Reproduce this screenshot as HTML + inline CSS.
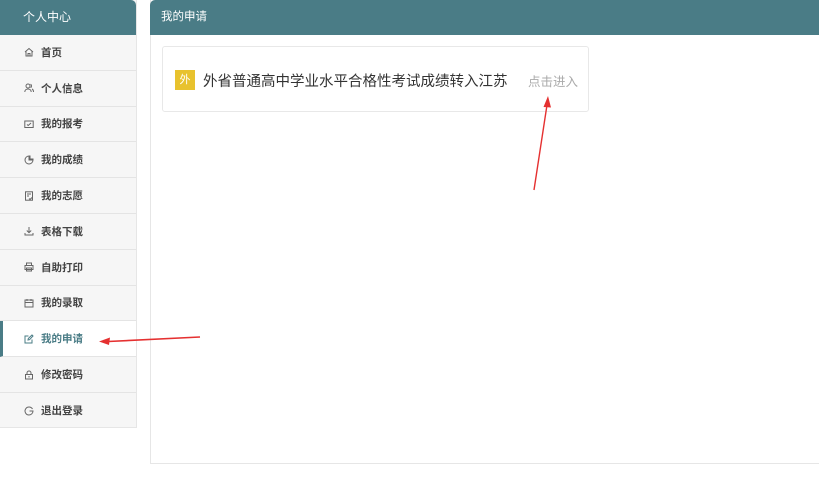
<!DOCTYPE html>
<html><head><meta charset="utf-8"><style>
*{margin:0;padding:0;box-sizing:border-box}
body{width:819px;height:481px;background:#fff;font-family:"Liberation Sans","Noto Sans CJK SC",sans-serif;position:relative;overflow:hidden}
.side{position:absolute;left:0;top:0;width:137px;height:428px;background:#f6f6f6;border-right:1px solid #e6e6e6;border-bottom:1px solid #e6e6e6}
.sh{height:35px;background:#4a7c86;color:#fff;font-size:12px;line-height:35px;padding-left:23px;border-radius:0 5px 0 0}
.it{height:35.8px;border-bottom:1px solid #e4e4e4;font-size:10.5px;font-weight:bold;color:#444;display:flex;align-items:center;padding-left:24px}
.it svg{width:10px;height:10px;margin-right:7px;stroke:#666;fill:none;stroke-width:1}
.it.a{background:#fff;border-left:3px solid #4a7c86;padding-left:21px;color:#4a7c86}
.it.a svg{stroke:#4a7c86}
.main{position:absolute;left:150px;top:0;width:680px;height:464px;border:1px solid #e6e6e6;border-top:none}
.mh{height:35px;background:#4a7c86;color:#fff;font-size:11.5px;line-height:35px;padding-left:11px;border-radius:5px 0 0 0;margin-left:-1px}
.card{position:absolute;left:11px;top:46px;width:427px;height:66px;border:1px solid #e8e8e8;border-radius:3px;background:#fff}
.badge{position:absolute;left:12px;top:23px;width:20px;height:20px;background:#e8c22e;color:#fff;font-size:11px;text-align:center;line-height:20px}
.t{position:absolute;left:40px;top:23px;font-size:14.5px;color:#333;white-space:nowrap}
.go{position:absolute;left:365px;top:24px;font-size:12.5px;color:#aaa}
</style></head><body>
<div class="side">
<div class="sh">个人中心</div>
<div class="it"><svg viewBox="0 0 10 10"><path d="M1 5L5 1.5 9 5M2 4.2V9h6V4.2M4 9V6.5h2V9"/></svg>首页</div>
<div class="it"><svg viewBox="0 0 10 10"><circle cx="4" cy="3" r="2"/><path d="M0.8 9c0-2 1.5-3 3.2-3s3.2 1 3.2 3M6.5 1.2a2 2 0 010 3.5M8 6c1 .5 1.5 1.5 1.5 3"/></svg>个人信息</div>
<div class="it"><svg viewBox="0 0 10 10"><rect x="0.8" y="2" width="8.4" height="6.5"/><path d="M3 5.5l1.2 1L7 4"/></svg>我的报考</div>
<div class="it"><svg viewBox="0 0 10 10"><path d="M5 1a4 4 0 104 4H5z"/><path d="M6 0.5v3.5h3.5"/></svg>我的成绩</div>
<div class="it"><svg viewBox="0 0 10 10"><rect x="1.5" y="0.8" width="7" height="8.4"/><path d="M3 3h4M3 5h2M5 7.5l1 1 2-2"/></svg>我的志愿</div>
<div class="it"><svg viewBox="0 0 10 10"><path d="M5 1v5.5M2.8 4.5L5 6.7 7.2 4.5M1 7v2h8V7"/></svg>表格下载</div>
<div class="it"><svg viewBox="0 0 10 10"><path d="M2.5 3.5V1h5v2.5M1 3.5h8v4H1zM2.5 6h5v3h-5z"/></svg>自助打印</div>
<div class="it"><svg viewBox="0 0 10 10"><rect x="1" y="2" width="8" height="7"/><path d="M1 4.5h8M3 1v2M7 1v2"/></svg>我的录取</div>
<div class="it a"><svg viewBox="0 0 10 10"><path d="M8 5.5V9H1V2h3.5M4 6l.3-1.5L8 1l1 1-3.5 3.7z"/></svg>我的申请</div>
<div class="it"><svg viewBox="0 0 10 10"><rect x="1.5" y="4.5" width="7" height="4.5"/><path d="M3 4.5V3a2 2 0 014 0v1.5M5 6v1.5"/></svg>修改密码</div>
<div class="it" style="border-bottom:none"><svg viewBox="0 0 10 10"><path d="M8.5 3A4 4 0 105 9a4 4 0 004-4H5.5"/></svg>退出登录</div>
</div>
<div class="main">
<div class="mh">我的申请</div>
<div class="card"><div class="badge">外</div><div class="t">外省普通高中学业水平合格性考试成绩转入江苏</div><div class="go">点击进入</div></div>
</div>
<svg style="position:absolute;left:0;top:0" width="819" height="481">
<path d="M200 337L108 341.5" stroke="#e53030" stroke-width="1.6" fill="none"/>
<path d="M99 341.5L110 337.5 109 345z" fill="#e53030"/>
<path d="M534 190L547 105" stroke="#e53030" stroke-width="1.4" fill="none"/>
<path d="M548 96L543.5 107 551 107.5z" fill="#e53030"/>
</svg>
</body></html>
